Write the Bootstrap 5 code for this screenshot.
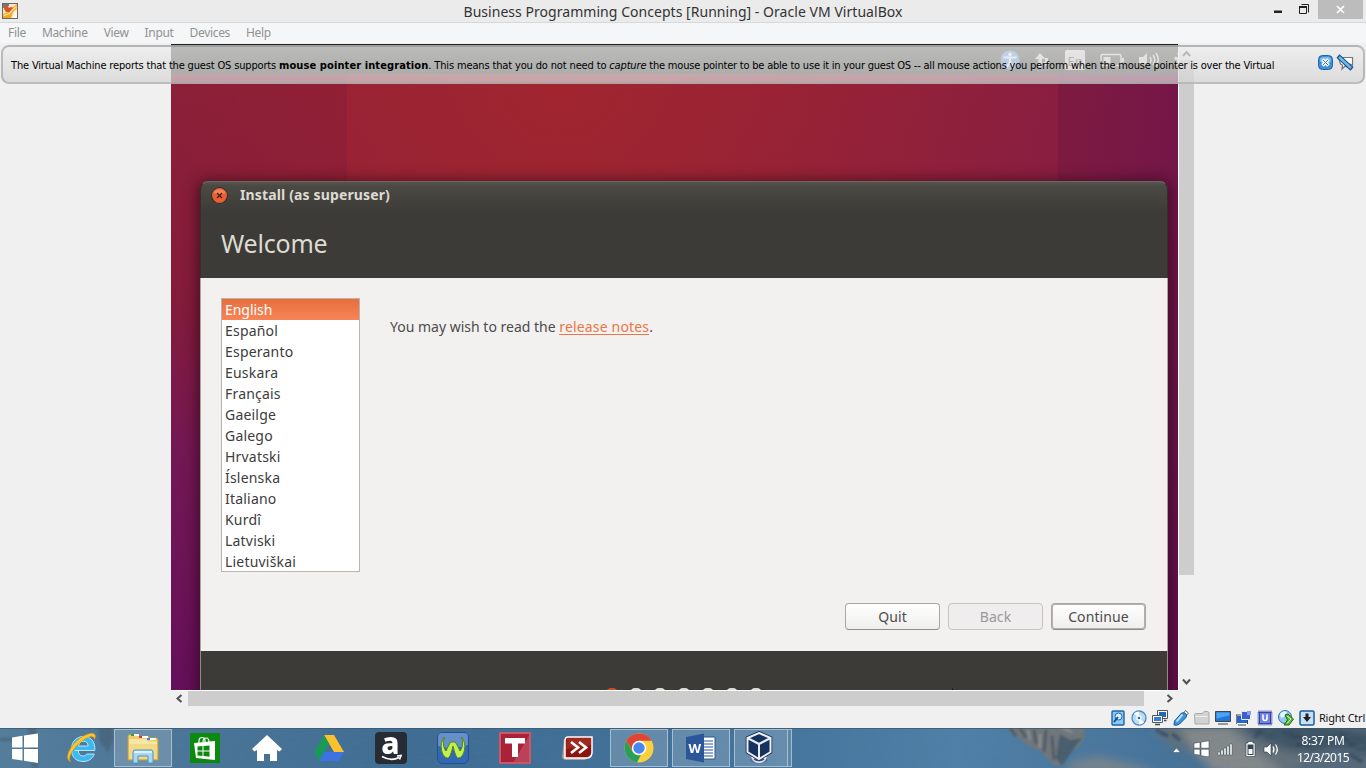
<!DOCTYPE html>
<html lang="en">
<head>
<meta charset="utf-8">
<meta name="viewport" content="width=device-width, initial-scale=1">
<title>Business Programming Concepts [Running] - Oracle VM VirtualBox</title>
<link href="https://cdn.jsdelivr.net/npm/bootstrap@5.3.0/dist/css/bootstrap.min.css" rel="stylesheet">
<style>
  body{font-family:"Noto Sans",sans-serif;font-size:14px;line-height:1.2;background:#f0f0f0;color:#222}
  svg{display:block;flex:none}
  .desktop{height:768px;width:1366px}

  /* host window */
  .host-title{height:23px;background:#ebebeb;border-bottom:1px solid #d6d9dc}
  .host-title .caption{font-size:14px;letter-spacing:.04px;color:#333;padding-top:2px}
  .win-ctl{right:3px;top:0}
  .win-close{width:45px;height:19px;background:#bcbcbc}
  .host-menu{height:20px;background:#f5f6f7;font-size:12px;letter-spacing:-.33px;color:#929292;padding-left:8px;gap:16px}
  .workspace{height:685px;padding-top:1px}

  /* message strip */
  .notice{left:1px;top:2px;width:1364px;height:39px;border:2px solid rgba(150,150,150,.55);border-radius:8px;
    background:linear-gradient(rgba(236,236,236,.72),rgba(212,212,212,.72));
    font:11px/14px "DejaVu Sans Condensed","DejaVu Sans",sans-serif;color:#000;padding:1px 8px 0 8px;z-index:5}
  .notice .msg{white-space:pre;padding-top:1px}
  .s1{letter-spacing:-.164px}.s2{letter-spacing:.1px}.s3{letter-spacing:-.145px}.s4{letter-spacing:-.156px}.s5{letter-spacing:-.21px}

  /* guest */
  .stage{margin-left:171px}
  .guest{width:1007px;height:646px;
    background:
      linear-gradient(90deg,rgba(60,0,60,.10) 176px,transparent 176px 887px,rgba(50,0,60,.12) 887px),
      radial-gradient(ellipse 760px 760px at 390px 40px,#a0252f 0,#97223400 100%),
      linear-gradient(100deg,#8a1e4200 45%,#7c1a4a 80%,#741650 92%,#6a1250),
      linear-gradient(#8c2040 0,#7c1a44 40%,#6a1568 62%,#651060 100%)}
  .guest-panel{height:30px;background:#3c3b37;border-top:1px solid #22211f;padding-left:829px;gap:15px;color:#dfdbd2}
  .installer{margin:107px 0 0 29px;width:968px;height:560px;box-shadow:0 2px 14px 3px rgba(20,0,10,.5);border-radius:8px 8px 0 0}
  .inst-head{height:97px;background:linear-gradient(#55544e 0,#4a4943 4px,#3c3b37 32px);border:1px solid #31302c;border-top-color:#6a6861;border-bottom:0;border-radius:8px 8px 0 0;color:#dfdbd2}
  .inst-bar{height:26px;padding-left:10px;gap:12px}
  .inst-bar .t{font-weight:700;font-size:14px;letter-spacing:.14px}
  .inst-head h1{font-size:25px;font-weight:400;letter-spacing:-.2px;margin:18px 0 0 20px;line-height:34px}
  .inst-body{height:373px;background:#f2f1f0;border-left:1px solid #aaa6a0;border-right:1px solid #aaa6a0;padding:20px 21px 21px 20px;color:#4c4c4c}
  .lang{width:139px;height:274px;background:#fff;border:1px solid #b9b4ad;overflow:hidden;letter-spacing:.2px;--bs-list-group-border-radius:0}
  .lang .list-group-item{height:21px;line-height:20px;padding:1px 3px 0;border:0;color:#3c3c3c;background:none}
  .lang .list-group-item.active{background:linear-gradient(#e86f3c,#f68456);color:#fff;margin:0;letter-spacing:-.05px}
  .note{margin:19px 0 0 30px;line-height:20px}
  .note a{color:#eb7646;text-decoration:none;border-bottom:1px solid #eb7646;letter-spacing:.17px;display:inline-block;height:18px}
  .inst-btn{width:95px;height:27px;padding:0;font-size:14px;line-height:24px;border:1px solid #aaa6a2;border-bottom-color:#908d89;border-radius:4px;background:linear-gradient(#fff,#efeeed);color:#4c4c4c;letter-spacing:.1px}
  .inst-btn:disabled{background:#efedee;border-color:#c6c3c0;color:#9a9998;opacity:1}
  .inst-btn.dflt{box-shadow:inset 0 0 0 1px #b3b0ad}
  .inst-foot{height:80px;background:#3c3b37;border-left:1px solid #8f8c86;border-right:1px solid #8f8c86;padding:37px 0 0 405px;gap:12px}
  .pg{width:12px;height:12px;border-radius:5px;background:#dedad4}
  .pg.on{background:#cf4f1c}

  /* scrollbars */
  .vbar{width:16px;border-left:1px solid #fff;padding-top:5px}
  .vthumb{width:15px;height:515px;background:#cdcdcd}
  .hbar{width:1007px;height:16px;border-top:1px solid #fff}
  .hthumb{width:956px;height:15px;background:#cdcdcd}

  .status{height:20px;gap:5px;padding-right:1px;margin-top:2px;color:#111}
  .status .hk{font-size:11px;letter-spacing:-.24px;margin-left:-1px}

  /* taskbar */
  .taskbar{height:40px;background:linear-gradient(#4c799d,#416e94)}
  .taskbar .bg{left:0;top:0;z-index:0}
  .taskbar svg{overflow:visible}
  .taskbar svg.bg{overflow:hidden}
  .slot{width:62px;height:40px;padding:1px 2px}
  .slot>div{width:58px;height:38px}
  .slot .lit{background:rgba(190,205,215,.28);border:1px solid rgba(200,218,230,.65)}
  .slot-last{width:56px}
  .slot.slot-last>div{width:54px}
  .stack-edge{width:4px;height:38px;border:1px solid rgba(200,218,230,.65);border-left:0;background:rgba(190,205,215,.2)}
  .clock{width:64px;font-size:12px;line-height:17px;color:#fff;text-align:center;margin-right:11px;padding-top:1px}
  .c1{letter-spacing:-.3px}.c2{letter-spacing:-.55px}
</style>
</head>
<body class="overflow-hidden">
<div class="desktop d-flex flex-column">

  <header class="host-title position-relative d-flex align-items-center justify-content-center">
    <svg class="position-absolute start-0 top-0" width="20" height="22" viewBox="0 0 20 22">
      <rect x="2.500" y="3.500" width="15" height="15" fill="#fbe5c0" stroke="#6f675a"/>
      <path d="M3 18v-4l5-2 3-3 6-5v4l-4 4-2 6z" fill="#f2a62c"/><path d="M5 6h3l1 2 2-1 3 1-3 4H6L4 9z" fill="#d9522b"/>
      <path d="M3.500 15.500l6-2 3-4 4.500-3" stroke="#ffe98a" stroke-width="1.300" fill="none"/><path d="M3 4h6v2H5v2H3z" fill="#777"/><path d="M12 18l2-5 3-2v7z" fill="#fff8e8"/>
    </svg>
    <span class="caption">Business Programming Concepts [Running] - Oracle VM VirtualBox</span>
    <div class="win-ctl position-absolute d-flex">
      <svg width="60" height="19" viewBox="0 0 60 19"><path d="M16 10.500h8v2.500h-8z" fill="#222"/><path d="M43.500 4.500h7v8" fill="none" stroke="#222"/><path d="M41.500 6.500h7v7h-7z" fill="#ebebeb" stroke="#222"/><path d="M41 6h8v2h-8z" fill="#222"/></svg>
      <div class="win-close d-flex align-items-center justify-content-center"><svg width="9" height="9" viewBox="0 0 9 9"><path d="M1 1l7 7M8 1L1 8" stroke="#fff" stroke-width="1.700"/></svg></div>
    </div>
  </header>

  <nav class="host-menu d-flex align-items-center">
    <span>File</span><span>Machine</span><span>View</span><span>Input</span><span>Devices</span><span>Help</span>
  </nav>

  <main class="workspace position-relative">
    <div class="notice position-absolute d-flex align-items-center">
      <div class="msg flex-grow-1"><span class="s1">The Virtual Machine reports that the guest OS supports </span><b class="s2">mouse pointer integration</b><span class="s3">. This means that you do not need to </span><i class="s4">capture </i><span class="s5">the mouse pointer to be able to use it in your guest OS -- all mouse actions you perform when the mouse pointer is over the Virtual</span></div>
      <svg class="mb-1" width="38" height="18" viewBox="0 0 38 18">
        <rect x="1.500" y="1.500" width="14" height="14" rx="4" fill="#3f8fd6" stroke="#1c64ab"/><rect x="3" y="3" width="11" height="6" rx="3" fill="#7dbcec"/>
        <path d="M5.500 5.500l6 6M11.500 5.500l-6 6" stroke="#fff" stroke-width="3.600"/><path d="M6 6l5 5M11 6l-5 5" stroke="#2f77b8" stroke-width="1"/>
        <path d="M21.500 3.500h14v8l-2.500-1.500-3 3-2-1-3 3 .5-4-2-1z" fill="#fff" stroke="#777" stroke-width="1.200"/><path d="M21 2l14 13" stroke="#1b4e80" stroke-width="4.500"/><path d="M22 3l12 11" stroke="#6ebaf2" stroke-width="2.400"/>
      </svg>
    </div>

    <div class="stage d-flex">
      <section class="guest overflow-hidden">
        <div class="guest-panel d-flex align-items-center">
          <svg width="20" height="22" viewBox="0 0 20 22"><circle cx="10" cy="11" r="9.500" fill="#5294e2"/><circle cx="10" cy="5.500" r="1.800" fill="#fff"/><path d="M3.500 8.500h13M10 8v5l-3 5M10 13l3 5" stroke="#fff" stroke-width="2" fill="none"/></svg>
          <svg width="15" height="18" viewBox="0 0 15 18" fill="#dfdbd2"><path d="M5 2l5.500 6H7v8H3.500V8H0z"/><path d="M11 15l-3.500-4H10V7h3v4h2z"/></svg>
          <svg width="20" height="20" viewBox="0 0 20 20"><rect width="20" height="20" rx="1.500" fill="#dfdbd2"/><text x="2.500" y="15.500" font-size="13" font-family="Noto Sans" fill="#3c3b37">En</text></svg>
          <svg width="24" height="14" viewBox="0 0 24 14"><rect x="1" y="1.500" width="20" height="11" rx="1.500" fill="none" stroke="#dfdbd2" stroke-width="1.500"/><path d="M3.500 4h7v6h-7zM22 5h2v4h-2z" fill="#dfdbd2"/></svg>
          <svg class="ms-n1" width="20" height="18" viewBox="0 0 20 18"><path d="M0 6h4l4-4v14l-4-4H0z" fill="#dfdbd2"/><path d="M11 6q2 3 0 6M14 4q3.500 5 0 10M17 2q4.500 7 0 14" stroke="#dfdbd2" stroke-width="1.500" fill="none"/></svg>
          <svg width="18" height="18" viewBox="0 0 18 18"><circle cx="9" cy="9" r="4.800" fill="none" stroke="#dfdbd2" stroke-width="3"/><circle cx="9" cy="9" r="7.300" fill="none" stroke="#dfdbd2" stroke-width="2.500" stroke-dasharray="2.900 2.830"/></svg>
        </div>

        <div class="installer">
          <div class="inst-head">
            <div class="inst-bar d-flex align-items-center">
              <svg width="17" height="17" viewBox="0 0 17 17"><circle cx="8.500" cy="8.500" r="8.300" fill="#2b2a27"/><circle cx="8.500" cy="8.500" r="7.500" fill="#ea5f33"/><path d="M2.500 6a6.500 6 0 0 1 12 0q-6 2-12 0z" fill="#f4835d"/><path d="M6 6l5 5M11 6l-5 5" stroke="#41190c" stroke-width="1.100"/></svg>
              <span class="t">Install (as superuser)</span>
            </div>
            <h1>Welcome</h1>
          </div>
          <div class="inst-body d-flex flex-column">
            <div class="d-flex">
              <div class="lang list-group">
                <div class="list-group-item active">English</div>
                <div class="list-group-item">Español</div>
                <div class="list-group-item">Esperanto</div>
                <div class="list-group-item">Euskara</div>
                <div class="list-group-item">Français</div>
                <div class="list-group-item">Gaeilge</div>
                <div class="list-group-item">Galego</div>
                <div class="list-group-item">Hrvatski</div>
                <div class="list-group-item">Íslenska</div>
                <div class="list-group-item">Italiano</div>
                <div class="list-group-item">Kurdî</div>
                <div class="list-group-item">Latviski</div>
                <div class="list-group-item">Lietuviškai</div>
              </div>
              <p class="note">You may wish to read the <a href="#">release notes</a>.</p>
            </div>
            <div class="d-flex justify-content-end gap-2 mt-auto">
              <button class="btn inst-btn">Quit</button>
              <button class="btn inst-btn" disabled>Back</button>
              <button class="btn inst-btn dflt">Continue</button>
            </div>
          </div>
          <div class="inst-foot d-flex">
            <i class="pg on"></i><i class="pg"></i><i class="pg"></i><i class="pg"></i><i class="pg"></i><i class="pg"></i><i class="pg"></i>
            <svg class="ms-auto me-5" width="170" height="4" viewBox="0 0 170 4"><path d="M3 0v4h3z" fill="#0b0b0a"/></svg>
          </div>
        </div>
      </section>

      <div class="vbar d-flex flex-column">
        <svg width="15" height="11" viewBox="0 0 15 11"><path d="M4 7l3.500-4L11 7" fill="none" stroke="#444" stroke-width="2"/></svg>
        <div class="vthumb"></div>
        <svg class="mt-auto" width="15" height="17" viewBox="0 0 15 17"><path d="M4 6.500l3.500 4 3.500-4" fill="none" stroke="#505050" stroke-width="2"/></svg>
      </div>
    </div>

    <div class="stage hbar d-flex">
      <svg width="17" height="15" viewBox="0 0 17 15"><path d="M10.500 4l-4 3.500 4 3.500" fill="none" stroke="#505050" stroke-width="2"/></svg>
      <div class="hthumb"></div>
      <svg class="ms-auto" width="17" height="15" viewBox="0 0 17 15"><path d="M6.500 4l4 3.500-4 3.500" fill="none" stroke="#505050" stroke-width="2"/></svg>
    </div>

    <div class="status d-flex align-items-center justify-content-end">
      <svg width="16" height="16" viewBox="0 0 16 16"><rect x="2" y="1" width="12" height="14" rx="1" fill="#8cc8f2" stroke="#1b66ac" stroke-width="1.400"/><circle cx="8.500" cy="6.500" r="3.500" fill="#dff1fd" stroke="#1b66ac"/><path d="M4 12l4-5" stroke="#0f4e8c" stroke-width="2"/></svg>
      <svg width="16" height="16" viewBox="0 0 16 16"><circle cx="8" cy="8" r="7" fill="#b8dcf6" stroke="#4a8ac6" stroke-width="1.300"/><path d="M8 8L3 3.500A7 7 0 0 1 8 1.500zM8 8l5 4.500A7 7 0 0 1 8 14.500z" fill="#fff"/><circle cx="8" cy="8" r="2" fill="#2d63b5" stroke="#fff" stroke-width="1.300"/></svg>
      <svg width="16" height="16" viewBox="0 0 16 16"><path d="M5.500.5h10v8h-10z" fill="#fff" stroke="#555"/><path d="M7 2h7v5H7z" fill="#1e68c4"/><path d="M.5 5.500h10v7H.5z" fill="#fff" stroke="#555"/><path d="M2 7h7v4H2z" fill="#2d7fe0"/><path d="M3 14.500h5M12 10.500h2.500" stroke="#444" stroke-width="1.500"/></svg>
      <svg width="16" height="16" viewBox="0 0 16 16"><path d="M10 4l2.500-3.500L15.500 3l-3 3.500z" fill="#fff" stroke="#666"/><path d="M1.500 11l7-8q3-1 5 1.500.5 2-1 3.500l-6 6Q3.500 16 1 15z" fill="#3c93df" stroke="#14599c"/><path d="M3.500 11.500l6-7" stroke="#b5dcf8" stroke-width="2"/></svg>
      <svg width="16" height="16" viewBox="0 0 16 16"><path d="M.5 4.500l1-1h7l1.500-2h4l1 1.500v11h-14z" fill="#d2d2d2" stroke="#aaa"/><path d="M1.500 6.500h12" stroke="#efefef"/></svg>
      <svg width="16" height="16" viewBox="0 0 16 16"><path d="M.5 1.500h15v10H.5z" fill="#1f76dc" stroke="#444"/><path d="M1.500 2.500h13v3l-13 3z" fill="#4fa2f0"/><path d="M3 14h10" stroke="#999" stroke-width="2"/></svg>
      <svg width="16" height="16" viewBox="0 0 16 16"><path d="M.5 5.500h11v8H.5z" fill="#1e68d0" stroke="#fff"/><path d="M0 5h5M.2 5v9M11.500 10v4M2 15h8" stroke="#444"/><path d="M5.500 1.500h9v8h-9z" fill="#3c60cf" stroke="#e9e9f5"/><path d="M11 1h4v4h-4z" fill="#8ca0ea"/></svg>
      <svg width="16" height="16" viewBox="0 0 16 16"><rect x="1.500" y="1.500" width="13" height="13" fill="none" stroke="#3040a8" stroke-width="2" stroke-dasharray="1 1"/><rect x="2.500" y="2.500" width="11" height="11" fill="#6f84dd" stroke="#3343ad"/><path d="M6 4.500v4q0 2 2 2t2-2v-4" fill="none" stroke="#fff" stroke-width="1.600"/></svg>
      <svg width="16" height="16" viewBox="0 0 16 16"><circle cx="7" cy="7" r="6.500" fill="#8fc8ef" stroke="#2d73ae"/><path d="M2 4q3-4 7-2L6 7 3 8z" fill="#e7f6ff"/><path d="M7 5l3-1 5.500 5L11 15H6l3.500-5z" fill="#57b530" stroke="#226c13"/><path d="M9 6l4 3-4 4.500" stroke="#e4f8d6" fill="none"/></svg>
      <svg width="16" height="16" viewBox="0 0 16 16"><rect x="1" y="1" width="14" height="14" rx="1.500" fill="#c6e1f6" stroke="#1c5b9b" stroke-width="1.500"/><path d="M6.500 3.500h3V7H12l-4 5-4-5h2.500z" fill="#222"/></svg>
      <span class="hk">Right Ctrl</span>
    </div>
  </main>

  <footer class="taskbar position-relative d-flex align-items-center">
    <svg class="bg position-absolute" width="1366" height="40" viewBox="0 0 1366 40">
      <defs>
        <linearGradient id="sea" x1="0" x2="1"><stop offset="0" stop-color="#557d9c"/><stop offset=".3" stop-color="#3f6d94"/><stop offset=".55" stop-color="#43739b"/><stop offset=".7" stop-color="#5080a8"/><stop offset=".85" stop-color="#47749b"/><stop offset="1" stop-color="#4c6375"/></linearGradient>
        <filter id="grain" x="0" y="0" width="100%" height="100%"><feTurbulence type="fractalNoise" baseFrequency=".08 .25" numOctaves="3" seed="4"/><feColorMatrix values="0 0 0 0 .1  0 0 0 0 .2  0 0 0 0 .3  .7 0 0 0 -.22"/></filter>
        <filter id="soft"><feGaussianBlur stdDeviation="1.200"/></filter>
        <filter id="soft2"><feGaussianBlur stdDeviation="4"/></filter>
      </defs>
      <rect width="1366" height="40" fill="url(#sea)"/>
      <g filter="url(#soft)">
        <path d="M1001 -3h84l-1 14-6 9-8 2-8 14-6 3-16-16-12-5-14-12z" fill="#71777a"/>
        <path d="M1060 6l10 6 12-2-8 10-12 18-6-8z" fill="#4a5d6d"/><path d="M1020 0l6 10M1034 2l2 14M1046 2l-2 22M1052 8l2 24M1010 0l6 8" stroke="#525c63" stroke-width="3"/><path d="M1028 2l2 10M1040 6l0 14M1062 0l10 4" stroke="#92948f" stroke-width="2"/>
        <path d="M98 -2h14l2 12-6 14-8-10zM28 -2h8l2 42h-6zM0 10h30v3H0z" fill="#3e5361" opacity=".45"/>
      </g>
      <g filter="url(#soft2)">
        <path d="M1150 -6h226v52h-140l-40-20-30-12z" fill="#637079"/>
        <path d="M1180 0h50l26 24 30 22h-70l-20-20z" fill="#85898a"/>
        <path d="M1236 -6h80l60 10v24l-50 0-40-6-30-12z" fill="#3d5263"/>
        <path d="M1310 26l30-6 30 10v16h-80z" fill="#56697a"/>
        <path d="M1060 46l14-14 26-4 40 10 20 8z" fill="#76838c"/>
      </g>
      <path d="M1156 2l12 6M1172 6l8 6M1262 2l-8 8M1282 4l20 6M1296 16l14 2M1340 6l14 12M1350 26l12 8" stroke="#35475a" stroke-width="4" filter="url(#soft)" opacity=".7"/>
      <rect width="1366" height="40" filter="url(#grain)" opacity=".45"/>
      <path d="M0 .5h1366" stroke="#3a566b" opacity=".7"/>
    </svg>

    <div class="position-relative d-flex align-items-center w-100">
      <svg width="50" height="40" viewBox="0 0 50 40" fill="#fff"><path d="M12 9.500l10.500-1.700v11.700H12zM24 7.600L38 5.500v14H24zM12 21h10.500v11.600L12 31zM24 21h14v14l-14-2.200z"/></svg>

      <div class="slot"><div class="d-flex align-items-center justify-content-center">
        <svg width="34" height="34" viewBox="0 0 34 34"><path d="M10.500 19.500h20.300C31.500 10 26.500 5.500 19.500 5.500 12 5.500 7.500 11 7.500 18.500 7.500 26 12 30.500 19 30.500c5.500 0 9.500-2.500 11.300-7.500h-7.500c-1 1.500-2 2-3.800 2-3 0-4.500-2-4.700-5.500M14.500 15c.5-3 2.200-4.700 5-4.700s4.400 1.700 4.700 4.700z" fill="#3db8f0" stroke="#c4ecfc" stroke-width=".9" fill-rule="evenodd"/><path d="M7 31C-3 27 11 6 26 2.500c5-1 6.500 2 4.500 6 0-3-3-3.500-6-2.300C13 11 2 26 7 31z" fill="#fbc62c" stroke="#d98e12" stroke-width=".6"/></svg>
      </div></div>

      <div class="slot"><div class="lit d-flex align-items-center justify-content-center">
        <svg width="34" height="32" viewBox="0 0 34 32"><path d="M2 4q0-1.500 2-1.500h8l1.500 2H23V6h8l1 2v20H2z" fill="#eccf72" stroke="#c69b3b"/><path d="M5 2h8v2H5z" fill="#fff"/><path d="M5 2h3v2H5z" fill="#2aa83c"/><path d="M13 4h9v2h-9z" fill="#fff"/><path d="M13 4h3v2h-3z" fill="#dc3e20"/><path d="M21 6h9v2h-9z" fill="#fff"/><path d="M21 6h3v2h-3z" fill="#2c8ee0"/><path d="M3 7h17l2 2.500h9V27H3z" fill="#f8e7a2"/><path d="M3 12h28v15H3z" fill="#f3da88"/><path d="M7 31V20q0-2 2-2h16q2 0 2 2v11h-5v-7H12v7z" fill="#a9d8f4" stroke="#4d93c4"/><path d="M8 20h18" stroke="#eefaff" stroke-width="1.500"/></svg>
      </div></div>

      <div class="slot"><div class="d-flex align-items-center justify-content-center">
        <svg width="30" height="30" viewBox="0 0 30 30"><path d="M0 0h30v30H0z" fill="#0c8a0e"/><path d="M4 10l21-2v19L6 25z" fill="#fff"/><path d="M9 11V8q0-3.500 3-3.500T15 8v3M13 9q0-4 3-4t3 4v1" fill="none" stroke="#fff" stroke-width="1.200"/><path d="M7.500 13.500l5-.5v4.500h-5zM13.500 13l6-.6v5.100h-6zM7.500 18.500h5V23l-5-.5zM13.500 18.500h6v5.200l-6-.6z" fill="#0c8a0e"/></svg>
      </div></div>

      <div class="slot"><div class="d-flex align-items-center justify-content-center">
        <svg width="32" height="30" viewBox="0 0 32 30"><path d="M16 2l15 14-2.500 2.500L26 17v11h-7v-7h-6v7H6V17l-2.500 1.500L1 16z" fill="#fff"/></svg>
      </div></div>

      <div class="slot"><div class="d-flex align-items-center justify-content-center">
        <svg width="30" height="28" viewBox="0 0 30 28"><path d="M10 1h10l10 17H20z" fill="#fbc22e"/><path d="M10 1l5 8.500L5 27 0 18z" fill="#1a9a58"/><path d="M10 18h20l-5 9H5z" fill="#3c73e0"/></svg>
      </div></div>

      <div class="slot"><div class="d-flex align-items-center justify-content-center">
        <svg width="32" height="32" viewBox="0 0 32 32"><rect width="32" height="32" rx="4" fill="#262b34"/><text x="15.500" y="22" text-anchor="middle" font-family="Noto Sans" font-weight="800" font-size="30" fill="#fff">a</text><path d="M7 24.500q9 5 17 1M22 24l4-.5-1.500 4" fill="none" stroke="#fff" stroke-width="1.700"/></svg>
      </div></div>

      <div class="slot"><div class="d-flex align-items-center justify-content-center">
        <svg width="32" height="32" viewBox="0 0 32 32"><rect x=".5" y=".5" width="31" height="31" rx="5" fill="#3167b4" stroke="#234e90"/><path d="M1 5q0-4 4-4h22q4 0 4 4v8Q16 19 1 14z" fill="#648fc9"/><path id="wv" d="M7.500 5C1 12 5 26 10.500 26c2.500 0 4-6 5.500-12 1.500 6 3 12 5.500 12C27 26 31 12 24.500 5c2 6 1 11-1.500 14-1.500-3-3-7-5-9h-4c-2 2-3.500 6-5 9-2.500-3-3.500-8-1.500-14z" fill="#c3ef4e" stroke="#4f861d"/></svg>
      </div></div>

      <div class="slot"><div class="d-flex align-items-center justify-content-center">
        <svg width="32" height="32" viewBox="0 0 32 32"><path d="M1 1h30v30H1z" fill="#ab2137" stroke="#c65a6b" stroke-width="2"/><path d="M31 2v29H14z" fill="#c4586a" opacity=".6"/><path d="M6 6h20v5.500h-7V25h-6V11.500H6z" fill="#fff"/></svg>
      </div></div>

      <div class="slot"><div class="d-flex align-items-center justify-content-center">
        <svg width="34" height="28" viewBox="0 0 34 28"><path d="M4 5L2 24l3 2h20l4-3" fill="#aaa5a2"/><path d="M8 3h24v16q-1 5-5 5H5V7q0-4 3-4z" fill="#8c160f" stroke="#fff" stroke-width="1.500"/><path d="M7 4h24v7L6 15z" fill="#a73026" opacity=".7"/><path d="M11 8l7 5.500-7 5.500M19 8l7 5.500-7 5.500" fill="none" stroke="#fff" stroke-width="2.700"/></svg>
      </div></div>

      <div class="slot"><div class="lit d-flex align-items-center justify-content-center">
        <svg width="30" height="30" viewBox="0 0 30 30"><circle cx="15" cy="15" r="14.500" fill="#fcd03d"/><path d="M2.400 7.800A14.500 14.500 0 0 1 27.600 7.800H15L8.800 18.600z" fill="#dd4534"/><path d="M2.400 7.800l6.400 11.100q2.500 3.600 6.200 3.300l2-.4-4 7.600A14.500 14.500 0 0 1 2.400 7.800z" fill="#28a05b"/><circle cx="15" cy="15" r="7.200" fill="#fff"/><circle cx="15" cy="15" r="5.700" fill="#4688ee"/></svg>
      </div></div>

      <div class="slot"><div class="lit d-flex align-items-center justify-content-center">
        <svg width="32" height="30" viewBox="0 0 32 30"><path d="M17 4h13v22H17z" fill="#fff" stroke="#2b579a"/><path d="M18 8h10M18 11h10M18 14h10M18 17h10M18 20h10M18 23h10" stroke="#2b579a" stroke-width="1.200"/><path d="M1 4l18-3.500v29L1 26z" fill="#2b579a"/><text x="9.800" y="20" text-anchor="middle" font-family="Open Sans" font-weight="700" font-size="13" fill="#fff">W</text></svg>
      </div></div>

      <div class="slot slot-last"><div class="lit d-flex align-items-center justify-content-center">
        <svg class="me-1" width="30" height="34" viewBox="0 0 30 34"><ellipse cx="15" cy="29" rx="9" ry="3.500" fill="#5c7299"/><path d="M7 26q2 6 8 6t8-6" fill="#dce4f0"/><path d="M10 28q5 3 10 0" fill="none" stroke="#3c527e" stroke-width="1.500"/><path d="M15 2l11.500 5v14L15 28 3.500 21V7z" fill="#16335f" stroke="#1b2c4a" stroke-width="3.600"/><path d="M15 2l11.500 5v14L15 28 3.500 21V7zM3.500 7L15 13l11.500-6M15 13v15" fill="none" stroke="#e8eef6" stroke-width="2"/></svg>
      </div></div>
      <div class="stack-edge"></div>

      <div class="d-flex align-items-center ms-auto">
        <svg width="130" height="40" viewBox="3 -1 130 40" fill="#fff">
          <path d="M14.500 23.500l4-4.500 4 4.500z" stroke="#3d5262" stroke-width=".6"/>
          <g transform="translate(36 12)" stroke="#263744" stroke-width=".5"><path d="M0 2.200l6-1v6H0zM7 1l8-1.200v7.400H7zM0 8.200h6v6l-6-1zM7 8.200h8V16l-8-1.300z"/></g>
          <g transform="translate(7 0)"><path d="M53 23h2v3h-2zM56 21h2v5h-2zM59 19h2v7h-2zM62 17h2v9h-2zM65 15h2v11h-2z" stroke="#263744" stroke-width=".4"/>
          <path d="M83 12.500h5V14h2v13.500h-9V14h2z" stroke="#263744" stroke-width=".6"/><path d="M82.500 15.500h6V26h-6z" fill="#33434f"/><path d="M83.500 20h4v5h-4z"/>
          <path d="M99 18h3l4-4v13l-4-4h-3z" stroke="#263744" stroke-width=".6"/><path d="M108 17.500q2 3 0 6M110.500 15.500q3.500 5 0 10" fill="none" stroke="#fff" stroke-width="1.200"/></g>
        </svg>
        <div class="clock"><div class="c1">8:37 PM</div><div class="c2">12/3/2015</div></div>
      </div>
    </div>
  </footer>
</div>
<script src="https://cdn.jsdelivr.net/npm/bootstrap@5.3.0/dist/js/bootstrap.bundle.min.js"></script>
</body>
</html>
